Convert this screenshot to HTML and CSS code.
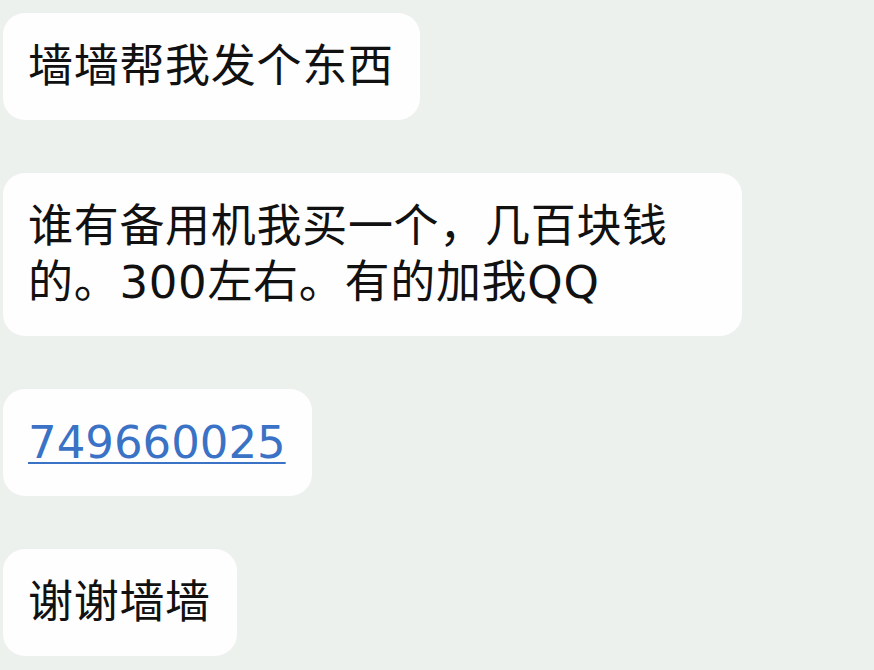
FILE: index.html
```html
<!DOCTYPE html>
<html lang="zh-CN">
<head>
    <meta charset="UTF-8">
    <meta name="viewport" content="width=device-width, initial-scale=1.0">
    <title>聊天记录</title>
    <link rel="stylesheet" href="styles.css">
</head>
<body>
    <div class="chat">
        <div class="bubble">墙墙帮我发个东西</div>
        <div class="bubble">谁有备用机我买一个，几百块钱的。300左右。有的加我QQ</div>
        <div class="bubble"><a class="link" href="#">749660025</a></div>
        <div class="bubble">谢谢墙墙</div>
    </div>
</body>
</html>
```

FILE: styles.css
```css
body {
    margin: 0;
    padding: 0;
    background-color: #edf1ee;
    font-family: "DejaVu Sans", "Noto Sans CJK SC", sans-serif;
}

.chat {
    display: flex;
    flex-direction: column;
    align-items: flex-start;
    gap: 53px;
    padding: 13px 0 0 3px;
}

.bubble {
    box-sizing: border-box;
    max-width: 739px;
    padding: 26px 26px 25px 25px;
    background-color: #fefefe;
    border-radius: 22px;
    color: #111;
    font-size: 45px;
    line-height: 56px;
    letter-spacing: 0.7px;
}

.link {
    color: #3a72c6;
    text-decoration: underline;
    text-decoration-thickness: 2px;
    text-underline-offset: 4px;
    letter-spacing: 0;
}
```
